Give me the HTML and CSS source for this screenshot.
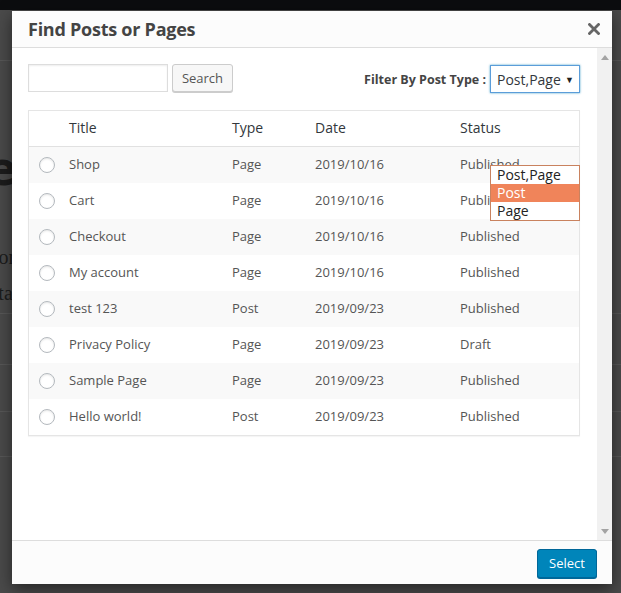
FILE: index.html
```html
<!DOCTYPE html>
<html>
<head>
<meta charset="utf-8">
<title>Find Posts or Pages</title>
<link rel="stylesheet" href="styles.css">
</head>
<body>
<div class="topbar"></div>
<div class="backdrop">
  <div class="bd-line bd-l1"></div>
  <div class="bd-title">Hel</div>
  <div class="bd-text bd-t1">Common</div>
  <div class="bd-text bd-t2">Data</div>
  <div class="bd-line bd-l2"></div>
  <div class="bd-line bd-l3"></div>
  <div class="bd-line bd-l4"></div>
  <div class="bd-line bd-l5"></div>
</div>

<div class="modal">
  <div class="modal-header">
    <h1 class="modal-title">Find Posts or Pages</h1>
    <button class="close-btn" aria-label="Close">
      <svg width="12" height="12" viewBox="0 0 12 12"><path d="M1.5 1.5 L10.5 10.5 M10.5 1.5 L1.5 10.5" stroke="#666" stroke-width="2.8" stroke-linecap="square"/></svg>
    </button>
  </div>
  <div class="modal-body">
    <div class="content">
      <div class="toolbar">
        <div class="search-group">
          <input class="search-input" type="text">
          <button class="btn">Search</button>
        </div>
        <div class="filter-group">
          <span class="filter-label">Filter By Post Type :</span>
          <div class="select">
            <span>Post,Page</span>
            <span class="caret">▼</span>
          </div>
        </div>
      </div>
      <div class="table">
        <div class="row head">
          <span></span><span class="cell">Title</span><span class="cell">Type</span><span class="cell">Date</span><span class="cell">Status</span>
        </div>
        <div class="row alt"><span class="radio"></span><span class="cell">Shop</span><span class="cell">Page</span><span class="cell">2019/10/16</span><span class="cell">Published</span></div>
        <div class="row"><span class="radio"></span><span class="cell">Cart</span><span class="cell">Page</span><span class="cell">2019/10/16</span><span class="cell">Published</span></div>
        <div class="row alt"><span class="radio"></span><span class="cell">Checkout</span><span class="cell">Page</span><span class="cell">2019/10/16</span><span class="cell">Published</span></div>
        <div class="row"><span class="radio"></span><span class="cell">My account</span><span class="cell">Page</span><span class="cell">2019/10/16</span><span class="cell">Published</span></div>
        <div class="row alt"><span class="radio"></span><span class="cell">test 123</span><span class="cell">Post</span><span class="cell">2019/09/23</span><span class="cell">Published</span></div>
        <div class="row"><span class="radio"></span><span class="cell">Privacy Policy</span><span class="cell">Page</span><span class="cell">2019/09/23</span><span class="cell">Draft</span></div>
        <div class="row alt"><span class="radio"></span><span class="cell">Sample Page</span><span class="cell">Page</span><span class="cell">2019/09/23</span><span class="cell">Published</span></div>
        <div class="row"><span class="radio"></span><span class="cell">Hello world!</span><span class="cell">Post</span><span class="cell">2019/09/23</span><span class="cell">Published</span></div>
      </div>
      <ul class="dropdown">
        <li>Post,Page</li>
        <li class="active">Post</li>
        <li>Page</li>
      </ul>
    </div>
    <div class="scrollbar">
      <span class="arrow up"></span>
      <span class="arrow down"></span>
    </div>
  </div>
  <div class="modal-footer">
    <button class="btn-primary">Select</button>
  </div>
</div>
</body>
</html>
```

FILE: styles.css
```css
* { box-sizing: border-box; }

html, body {
  margin: 0;
  padding: 0;
  height: 100%;
}

body {
  background: #4a4a4a;
  font-family: "Open Sans", "Noto Sans", sans-serif;
  overflow: hidden;
  position: relative;
}

.topbar {
  height: 10px;
  background: #0c0d0f;
}

.backdrop {
  display: flex;
  flex-direction: column;
}

.bd-line {
  height: 1px;
  background: #575757;
}

.bd-l1 { margin-top: 50px; }

.bd-title {
  margin-top: 78px;
  margin-left: -52px;
  font-family: "DejaVu Sans", sans-serif;
  font-size: 46px;
  line-height: 60px;
  color: #1c1c1c;
  font-weight: bold;
}

.bd-text {
  font-family: "Liberation Serif", serif;
  font-size: 20px;
  color: #1c1c1c;
  line-height: 24px;
}

.bd-t1 { margin-top: 46px; margin-left: -56px; }
.bd-t2 { margin-top: 12px; margin-left: -25px; }

.bd-l2 { margin-top: 8px; }
.bd-l3 { margin-top: 50px; }
.bd-l4 { margin-top: 46px; }
.bd-l5 { margin-top: 44px; }

/* Modal */
.modal {
  position: absolute;
  left: 12px;
  top: 11px;
  width: 600px;
  height: 573px;
  background: #fff;
  display: flex;
  flex-direction: column;
  box-shadow: 0 5px 15px rgba(0,0,0,0.5);
}

.modal-header {
  height: 37px;
  flex: none;
  background: #fcfcfc;
  border-bottom: 1px solid #dddddd;
  display: flex;
  align-items: center;
  justify-content: space-between;
  padding: 0 11px 0 16px;
}

.modal-title {
  margin: 0;
  font-size: 18px;
  font-weight: bold;
  color: #444;
  letter-spacing: -0.25px;
}

.close-btn {
  border: 0;
  background: none;
  padding: 0;
  width: 14px;
  height: 14px;
  display: flex;
  align-items: center;
  justify-content: center;
  margin-top: -1px;
}

.modal-body {
  flex: 1;
  display: flex;
  min-height: 0;
}

.content {
  flex: 1;
  position: relative;
  padding: 16px 17px 0 16px;
}

.toolbar {
  display: flex;
  justify-content: space-between;
  align-items: center;
  height: 28px;
}

.search-group {
  display: flex;
  gap: 4px;
}

.search-input {
  width: 140px;
  height: 28px;
  border: 1px solid #dddddd;
  box-shadow: inset 0 1px 2px rgba(0,0,0,0.07);
  margin: 0;
  padding: 0 6px;
  outline: none;
}

.btn {
  height: 28px;
  width: 61px;
  background: #f7f7f7;
  border: 1px solid #cccccc;
  border-radius: 3px;
  box-shadow: 0 1px 0 #cccccc;
  color: #555;
  font-family: "Open Sans", sans-serif;
  font-size: 13px;
  padding: 0;
}

.filter-group {
  display: flex;
  align-items: center;
  gap: 4px;
  margin-top: 2px;
}

.filter-label {
  font-size: 12.5px;
  font-weight: bold;
  color: #444;
}

.select {
  width: 90px;
  height: 28px;
  border: 1px solid #5b9dd9;
  box-shadow: 0 0 2px rgba(30,140,190,0.8);
  display: flex;
  align-items: center;
  justify-content: space-between;
  padding: 0 5px 0 6px;
  font-size: 14px;
  color: #32373c;
  background: #fff;
}

.caret {
  font-size: 9px;
  color: #222;
}

/* Table */
.table {
  margin-top: 18px;
  border: 1px solid #e5e5e5;
  box-shadow: 0 1px 1px rgba(0,0,0,0.04);
}

.row {
  display: grid;
  grid-template-columns: 40px 163px 83px 145px 1fr;
  height: 36px;
  align-items: center;
  font-size: 13px;
  color: #555;
  background: #fff;
}

.cell {
  margin-top: -3px;
}

.row.alt { background: #f9f9f9; }

.row.head {
  height: 36px;
  border-bottom: 1px solid #e1e1e1;
  font-size: 14px;
  color: #32373c;
}

.radio {
  width: 16px;
  height: 16px;
  border: 1px solid #b4b9be;
  border-radius: 50%;
  background: #fff;
  margin-left: 10px;
  margin-top: -1px;
  box-shadow: inset 0 1px 2px rgba(0,0,0,0.1);
}

/* Dropdown (open select list) */
.dropdown {
  position: absolute;
  left: 478px;
  top: 117px;
  width: 90px;
  margin: 0;
  padding: 0;
  list-style: none;
  background: #fff;
  border: 1px solid #c9825f;
  font-size: 14px;
  color: #222;
}

.dropdown li {
  height: 18px;
  line-height: 18px;
  padding-left: 6px;
}

.dropdown li.active {
  background: #f0845a;
  color: #fff;
}

/* Scrollbar */
.scrollbar {
  width: 15px;
  flex: none;
  background: #f1f1f1;
  display: flex;
  flex-direction: column;
  justify-content: space-between;
  align-items: center;
  padding: 7px 0 6px;
}

.arrow {
  width: 0;
  height: 0;
  border-left: 4px solid transparent;
  border-right: 4px solid transparent;
}

.arrow.up { border-bottom: 5px solid #a3a3a3; }
.arrow.down { border-top: 5px solid #a3a3a3; }

/* Footer */
.modal-footer {
  height: 44px;
  flex: none;
  background: #fcfcfc;
  border-top: 1px solid #dddddd;
  display: flex;
  align-items: center;
  justify-content: flex-end;
  padding: 0 15px 0 0;
}

.btn-primary {
  width: 60px;
  height: 29px;
  background: #0085ba;
  border: 1px solid #006799;
  border-radius: 3px;
  box-shadow: 0 1px 0 #006799;
  color: #fff;
  font-family: "Open Sans", sans-serif;
  font-size: 13px;
  padding: 0;
  margin-top: 1px;
}
```
